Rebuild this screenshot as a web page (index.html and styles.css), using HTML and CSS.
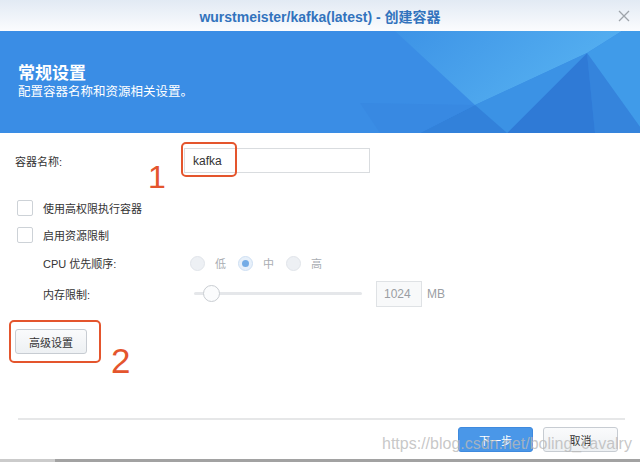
FILE: index.html
```html
<!DOCTYPE html>
<html lang="zh-CN">
<head>
    <meta charset="UTF-8">
    <title>wurstmeister/kafka(latest) - 创建容器</title>
    <link rel="stylesheet" href="styles.css">
</head>
<body>
    <div class="dialog">
        <div class="titlebar">
            <span></span>
            <span class="title">wurstmeister/kafka(latest) - 创建容器</span>
            <span class="close">
                <svg width="12" height="12" viewBox="0 0 12 12"><path d="M1 1L11 11M11 1L1 11" stroke="#9ea4aa" stroke-width="1.3" fill="none"/></svg>
            </span>
        </div>

        <div class="banner">
            <svg class="banner-bg" width="640" height="102" viewBox="0 0 640 102">
                <defs>
                    <linearGradient id="lite" x1="0" y1="0" x2="1" y2="0.4">
                        <stop offset="0" stop-color="#3d93e6"/>
                        <stop offset="1" stop-color="#56b1f1"/>
                    </linearGradient>
                </defs>
                <rect width="640" height="102" fill="#3a8de5"/>
                <polygon points="395,0 622,0 587,22 475,74" fill="url(#lite)"/>
                <polygon points="622,0 640,0 640,96 587,22" fill="#409be9"/>
                <polygon points="587,22 640,96 640,102 595,102" fill="#3584dc"/>
                <polygon points="587,22 595,102 507,102" fill="#2f7ad6"/>
                <polygon points="475,74 587,22 507,102" fill="#3b92e5"/>
                <polygon points="475,74 507,102 420,102" fill="#3281da"/>
                <polygon points="360,72 475,74 420,102 380,102" fill="#3889e2"/>
            </svg>
            <h1>常规设置</h1>
            <p>配置容器名称和资源相关设置。</p>
        </div>

        <div class="content">
            <div class="row name-row">
                <label class="name-label">容器名称:</label>
                <div class="name-field">
                    <input type="text" value="kafka">
                    <span class="mark mark-1"></span>
                    <span class="num num-1">1</span>
                </div>
            </div>

            <div class="row check-row first">
                <span class="checkbox"></span>
                <span>使用高权限执行容器</span>
            </div>
            <div class="row check-row">
                <span class="checkbox"></span>
                <span>启用资源限制</span>
            </div>

            <div class="row sub-row cpu-row">
                <span class="sub-label">CPU 优先顺序:</span>
                <span class="radio"></span><span class="radio-text">低</span>
                <span class="radio checked"></span><span class="radio-text">中</span>
                <span class="radio"></span><span class="radio-text">高</span>
            </div>

            <div class="row sub-row mem-row">
                <span class="sub-label">内存限制:</span>
                <div class="slider">
                    <span class="track"></span>
                    <span class="thumb"></span>
                </div>
                <span class="mem-input">1024</span>
                <span class="unit">MB</span>
            </div>

            <div class="adv-row">
                <button class="btn">高级设置</button>
                <span class="mark mark-2"></span>
                <span class="num num-2">2</span>
            </div>
        </div>

        <div class="footer">
            <button class="btn btn-primary">下一步</button>
            <button class="btn">取消</button>
        </div>
        <div class="bottom-strip"></div>

        <div class="watermark">https://blog.csdn.net/boling_cavalry</div>
    </div>
</body>
</html>
```

FILE: styles.css
```css
body {
    margin: 0;
    font-family: "Liberation Sans", "Noto Sans CJK SC", sans-serif;
    font-size: 11px;
    color: #333;
    background: #fff;
}
.dialog {
    width: 640px;
    height: 462px;
    display: flex;
    flex-direction: column;
    position: relative;
    overflow: hidden;
}
.titlebar {
    height: 31px;
    flex: none;
    display: grid;
    grid-template-columns: 1fr auto 1fr;
    align-items: center;
    background: linear-gradient(#e2eaf4, #fbfcfe);
}
.title {
    font-family: "Liberation Sans", "Noto Sans CJK SC", sans-serif;
    font-size: 14px;
    font-weight: bold;
    color: #3273bd;
}
.close {
    justify-self: end;
    padding-right: 10px;
    height: 12px;
}
.banner {
    height: 102px;
    flex: none;
    box-sizing: border-box;
    padding: 33px 0 0 18px;
    position: relative;
    color: #fff;
    background: #3a8de5;
}
.banner-bg {
    position: absolute;
    left: 0;
    top: 0;
}
.banner h1,
.banner p {
    position: relative;
    margin: 0;
}
.banner h1 {
    font-size: 17px;
    line-height: 20px;
    font-weight: bold;
}
.banner p {
    font-size: 12.5px;
    line-height: 16px;
}
.content {
    flex: 1;
    padding: 15px 0 0 15px;
}
.row {
    display: flex;
    align-items: center;
}
.name-row {
    height: 25px;
}
.name-label {
    width: 169px;
}
.name-field {
    position: relative;
}
.name-field input {
    width: 186px;
    height: 25px;
    box-sizing: border-box;
    border: 1px solid #d9dcdf;
    padding: 0 8px;
    font-family: "Liberation Sans", sans-serif;
    font-size: 12px;
    color: #333;
    outline: none;
}
.mark {
    position: absolute;
    box-sizing: border-box;
    border: 2px solid #e4552d;
    border-radius: 5px;
}
.mark-1 {
    left: -3px;
    top: -6px;
    width: 56px;
    height: 35px;
}
.num {
    position: absolute;
    font-family: "Liberation Sans", sans-serif;
    line-height: 1;
    color: #e4552d;
}
.num-1 {
    left: -36px;
    top: 13px;
    font-size: 32px;
}
.check-row {
    height: 16px;
    margin-left: 2px;
    margin-top: 11px;
}
.check-row.first {
    margin-top: 27px;
}
.checkbox {
    width: 16px;
    height: 16px;
    box-sizing: border-box;
    border: 1px solid #cdd2d7;
    border-radius: 2px;
    background: #fff;
    margin-right: 10px;
}
.sub-row {
    padding-left: 28px;
}
.sub-label {
    width: 147px;
}
.cpu-row {
    height: 16px;
    margin-top: 12px;
}
.radio {
    width: 15px;
    height: 15px;
    box-sizing: border-box;
    border-radius: 50%;
    border: 1px solid #e1e5ea;
    background: #edf0f4;
    margin-right: 10px;
    position: relative;
}
.radio.checked {
    background: #e7f0fa;
    border-color: #cfe0f3;
}
.radio.checked::after {
    content: "";
    position: absolute;
    left: 3px;
    top: 3px;
    width: 7px;
    height: 7px;
    border-radius: 50%;
    background: #74ace6;
}
.radio-text {
    color: #a9adb2;
    margin-right: 12px;
}
.mem-row {
    height: 26px;
    margin-top: 10px;
}
.slider {
    width: 172px;
    height: 18px;
    position: relative;
}
.track {
    position: absolute;
    left: 4px;
    right: 0;
    top: 7px;
    height: 3px;
    border-radius: 2px;
    background: #e5e7ea;
}
.thumb {
    position: absolute;
    left: 13px;
    top: 0;
    width: 17px;
    height: 17px;
    box-sizing: border-box;
    border-radius: 50%;
    border: 1px solid #c9cdd2;
    background: #fbfcfd;
}
.mem-input {
    width: 46px;
    height: 26px;
    box-sizing: border-box;
    border: 1px solid #dfe2e5;
    background: #f8f9fa;
    color: #9a9ea3;
    font-size: 12px;
    line-height: 24px;
    padding-left: 7px;
    margin-left: 14px;
}
.unit {
    color: #9a9ea3;
    font-size: 12px;
    margin-left: 5px;
}
.adv-row {
    position: relative;
    margin-top: 22px;
    width: 72px;
}
.mark-2 {
    left: -6px;
    top: -9px;
    width: 92px;
    height: 43px;
}
.num-2 {
    left: 96px;
    top: 14px;
    font-size: 35px;
}
.btn {
    width: 72px;
    height: 25px;
    box-sizing: border-box;
    border: 1px solid #c7ccd2;
    border-radius: 3px;
    background: linear-gradient(#fafbfc, #edf0f3);
    font-family: "Liberation Sans", "Noto Sans CJK SC", sans-serif;
    font-size: 11px;
    color: #333;
    padding: 0;
}
.footer {
    flex: none;
    height: 41px;
    box-sizing: border-box;
    margin: 0 15px 0 18px;
    border-top: 2px solid #e6e7e8;
    padding: 7px 7px 0 0;
    display: flex;
    justify-content: flex-end;
    gap: 10px;
}
.footer .btn {
    width: 75px;
}
.btn-primary {
    background: #4a97e8;
    border-color: #3f8ade;
    color: #fff;
}
.bottom-strip {
    flex: none;
    height: 3px;
    background: linear-gradient(to right, #cbcbcb 0, #cbcbcb 55px, #a2a2a2 55px);
}
.watermark {
    position: absolute;
    left: 382px;
    top: 435px;
    font-family: "Liberation Sans", sans-serif;
    font-size: 16px;
    line-height: 18px;
    color: rgba(185, 185, 185, 0.8);
    white-space: nowrap;
}
```
